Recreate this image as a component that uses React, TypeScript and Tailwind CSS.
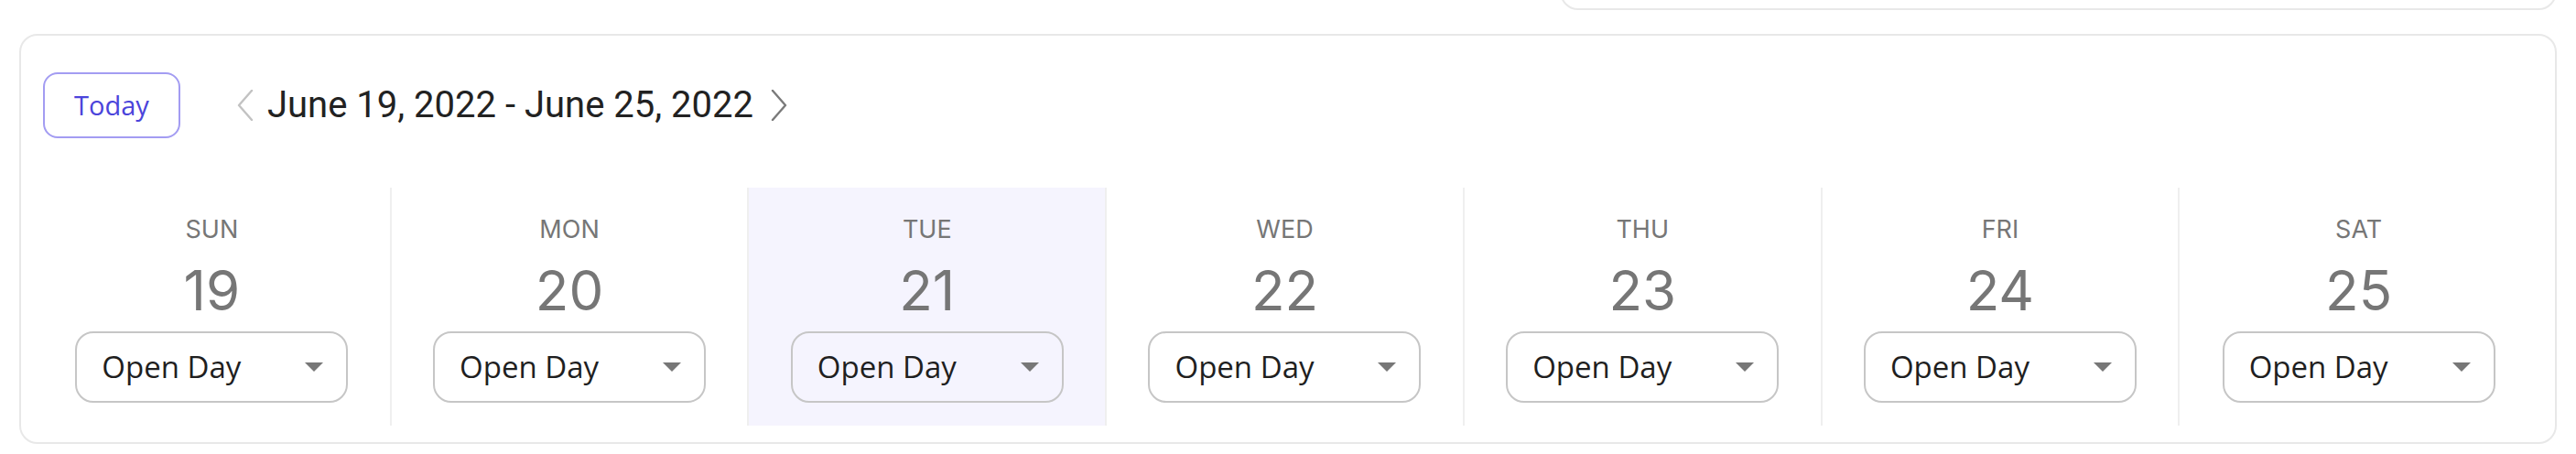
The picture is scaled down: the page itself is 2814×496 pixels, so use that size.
const days = [
  { name: "SUN", date: 19 },
  { name: "MON", date: 20 },
  { name: "TUE", date: 21, active: true },
  { name: "WED", date: 22 },
  { name: "THU", date: 23 },
  { name: "FRI", date: 24 },
  { name: "SAT", date: 25 },
];

function Chevron({ dir, color }: { dir: "left" | "right"; color: string }) {
  return (
    <svg width="18" height="34" viewBox="0 0 18 34" fill="none">
      <path
        d={dir === "left" ? "M16 1L2 17l14 16" : "M2 1l14 16L2 33"}
        stroke={color}
        strokeWidth="2.4"
        strokeLinecap="round"
        strokeLinejoin="round"
      />
    </svg>
  );
}

function DaySelect() {
  return (
    <button
      type="button"
      className="flex h-[78px] w-[298px] items-center justify-between rounded-[20px] border-2 border-[#c6c6c6] pl-[27px] pr-[25px] text-[33px] text-[#1f1f1f] [font-family:'Open_Sans',sans-serif]"
    >
      <span>Open Day</span>
      <svg width="20" height="10" viewBox="0 0 20 10">
        <path d="M0 0h20L10 10z" fill="#777777" />
      </svg>
    </button>
  );
}

export default function App() {
  return (
    <div className="min-h-[496px] w-full bg-white px-[21px] [font-family:Inter,sans-serif]">
      {/* card peeking in from above */}
      <div className="flex justify-end">
        <div className="-mt-[50px] h-[61px] w-[1089px] rounded-[20px] border-2 border-[#e8e8e8]" />
      </div>

      <div className="mt-[26px] h-[448px] rounded-[20px] border-2 border-[#e8e8e8] bg-white">
        {/* week header */}
        <div className="flex items-center pl-[24px] pt-[40px]">
          <button
            type="button"
            className="h-[72px] w-[150px] rounded-[16px] border-2 border-[#a39cf2] text-[29px] text-[#4b44db] [font-family:'Open_Sans',sans-serif]"
          >
            Today
          </button>
          <div className="ml-[62px]">
            <Chevron dir="left" color="#c2c2c2" />
          </div>
          <span className="ml-[15px] text-[40px] leading-none text-[#222222] [font-family:Roboto,sans-serif]">
            June 19, 2022 - June 25, 2022
          </span>
          <div className="ml-[19px]">
            <Chevron dir="right" color="#7a7a7a" />
          </div>
        </div>

        {/* days */}
        <div className="mt-[54px] grid grid-cols-7 pl-[14px] pr-[19px]">
          {days.map((d, i) => (
            <div
              key={d.name}
              className={`flex h-[260px] flex-col items-center ${i < 6 ? "border-r-2 border-[#efefef]" : ""} ${d.active ? "bg-[#f5f4fe]" : ""}`}
            >
              <div className="mt-[32px] text-[27px] leading-none text-[#767676]">{d.name}</div>
              <div className="mt-[23px] text-[60px] leading-none text-[#767676]">{d.date}</div>
              <div className="mt-[15px]">
                <DaySelect />
              </div>
            </div>
          ))}
        </div>
      </div>
    </div>
  );
}
